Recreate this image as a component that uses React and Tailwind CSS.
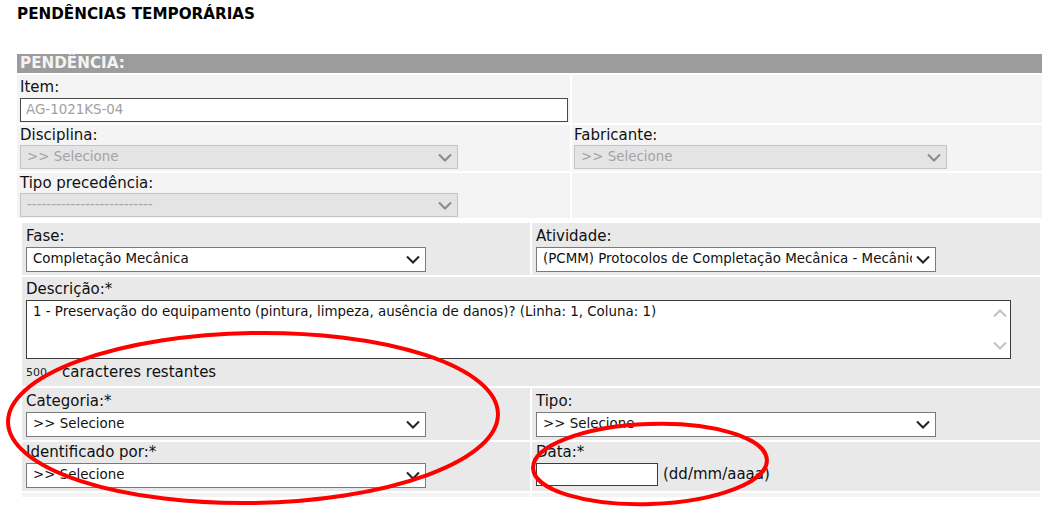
import React from "react";

const Chevron = ({ className }) => (
  <svg width="14" height="9" viewBox="0 0 14 9" className={className}>
    <path d="M1 1.5 L7 7.5 L13 1.5" fill="none" stroke="currentColor" strokeWidth="2" />
  </svg>
);

// select box drawn as div so it renders the same everywhere
const Select = ({ text, disabled, className = "" }) => (
  <div
    className={`flex items-center justify-between pl-[6px] pr-[5px] text-[13.4px] overflow-hidden ${
      disabled
        ? "bg-[#e4e4e4] border border-[#c4c4c4] text-[#a3a3a3]"
        : "bg-white border border-[#7a7a7a] text-[#111]"
    } ${className}`}
  >
    <span className="whitespace-nowrap overflow-hidden">{text}</span>
    <Chevron className={`shrink-0 ml-[4px] ${disabled ? "text-[#8a8a8a]" : "text-[#222]"}`} />
  </div>
);

const Label = ({ children, lh = "leading-[21px]" }) => <div className={`text-[15px] text-[#111] ${lh}`}>{children}</div>;

export default function App() {
  return (
    <div className="relative w-[1052px] h-[516px] overflow-hidden bg-white font-['DejaVu_Sans',sans-serif]">
      <div className="pt-[4px] pl-[17px] text-[15.2px] font-bold leading-[20px] text-black">PENDÊNCIAS TEMPORÁRIAS</div>

      <div className="ml-[17px] mt-[30px] w-[1025px] flex flex-col gap-[2px]">
        <div className="h-[19px] bg-[#9c9c9c] pl-[3px] text-[15.2px] font-bold leading-[19px] text-[#f4f4f4]">PENDÊNCIA:</div>

        {/* Item */}
        <div className="flex gap-[2px]">
          <div className="w-[553px] bg-[#f4f4f4] px-[3px] pt-[2px] pb-[1px]">
            <Label>Item:</Label>
            <div className="h-[24px] w-[548px] bg-white border border-[#4a4a4a] pl-[5px] text-[13.4px] leading-[22px] text-[#a0a0a0]">
              AG-1021KS-04
            </div>
          </div>
          <div className="flex-1 bg-[#f4f4f4]"></div>
        </div>

        {/* Disciplina / Fabricante */}
        <div className="flex gap-[2px]">
          <div className="w-[553px] bg-[#f4f4f4] px-[3px] pb-[2px]">
            <Label lh="leading-[20px]">Disciplina:</Label>
            <Select disabled text=">> Selecione" className="h-[24px] w-[438px]" />
          </div>
          <div className="flex-1 bg-[#f4f4f4] px-[2px] pb-[2px]">
            <Label lh="leading-[20px]">Fabricante:</Label>
            <Select disabled text=">> Selecione" className="h-[24px] w-[373px]" />
          </div>
        </div>

        {/* Tipo precedencia */}
        <div className="flex gap-[2px]">
          <div className="w-[553px] bg-[#f4f4f4] px-[3px] pb-[1px]">
            <Label lh="leading-[20px]">Tipo precedência:</Label>
            <Select disabled text="--------------------------" className="h-[24px] w-[438px]" />
          </div>
          <div className="flex-1 bg-[#f4f4f4]"></div>
        </div>

        {/* nested block */}
        <div className="pl-[5px] pr-[2px] pt-[3px]">
          <div className="grid grid-cols-2 gap-[2px]">
            <div className="bg-[#e9e9e9] px-[4px] pt-[3px] pb-[3px]">
              <Label>Fase:</Label>
              <Select text="Completação Mecânica" className="h-[25px] w-[400px]" />
            </div>
            <div className="bg-[#e9e9e9] px-[4px] pt-[3px] pb-[3px]">
              <Label>Atividade:</Label>
              <Select text="(PCMM) Protocolos de Completação Mecânica - Mecânica" className="h-[25px] w-[400px]" />
            </div>

            <div className="col-span-2 bg-[#e9e9e9] px-[4px] pt-[2px] pb-[3px]">
              <Label>Descrição:*</Label>
              <div className="flex h-[59px] w-[985px] bg-white border border-[#3c3c3c]">
                <div className="flex-1 pl-[6px] pt-[2px] text-[13.4px] leading-[18px] text-[#111]">
                  1 - Preservação do equipamento (pintura, limpeza, ausência de danos)? (Linha: 1, Coluna: 1)
                </div>
                <div className="w-[20px] flex flex-col items-center justify-between py-[8px] text-[#c2c2c2]">
                  <Chevron className="rotate-180" />
                  <Chevron />
                </div>
              </div>
              <div className="mt-[2px] flex items-center h-[22px]">
                <span className="w-[36px] text-[11px] text-[#222] pt-[3px]">500</span>
                <span className="text-[15px] text-[#111]">caracteres restantes</span>
              </div>
            </div>

            <div className="bg-[#e9e9e9] px-[4px] pt-[3px] pb-[3px]">
              <Label>Categoria:*</Label>
              <Select text=">> Selecione" className="h-[25px] w-[400px]" />
            </div>
            <div className="bg-[#e9e9e9] px-[4px] pt-[3px] pb-[3px]">
              <Label>Tipo:</Label>
              <Select text=">> Selecione" className="h-[25px] w-[400px]" />
            </div>

            <div className="bg-[#e9e9e9] px-[4px] pt-[0px] pb-[3px]">
              <Label>Identificado por:*</Label>
              <Select text=">> Selecione" className="h-[25px] w-[400px]" />
            </div>
            <div className="bg-[#e9e9e9] px-[4px] pt-[0px] pb-[3px]">
              <Label>Data:*</Label>
              <div className="flex items-center gap-[5px]">
                <div className="h-[23px] w-[122px] bg-white border border-[#3c3c3c]"></div>
                <span className="text-[15px] text-[#111]">(dd/mm/aaaa)</span>
              </div>
            </div>

            <div className="h-[4px] bg-[#f3f3f3]"></div>
            <div className="h-[4px] bg-[#f3f3f3]"></div>
          </div>
        </div>
      </div>

      {/* red annotation marks over the form */}
      <svg className="absolute left-0 top-0 pointer-events-none" width="1052" height="516">
        <ellipse cx="253" cy="418" rx="245" ry="85" fill="none" stroke="#f00" strokeWidth="4" transform="rotate(-1 253 418)" />
        <ellipse cx="650" cy="464" rx="117" ry="40" fill="none" stroke="#f00" strokeWidth="4" transform="rotate(-2 650 464)" />
      </svg>
    </div>
  );
}
